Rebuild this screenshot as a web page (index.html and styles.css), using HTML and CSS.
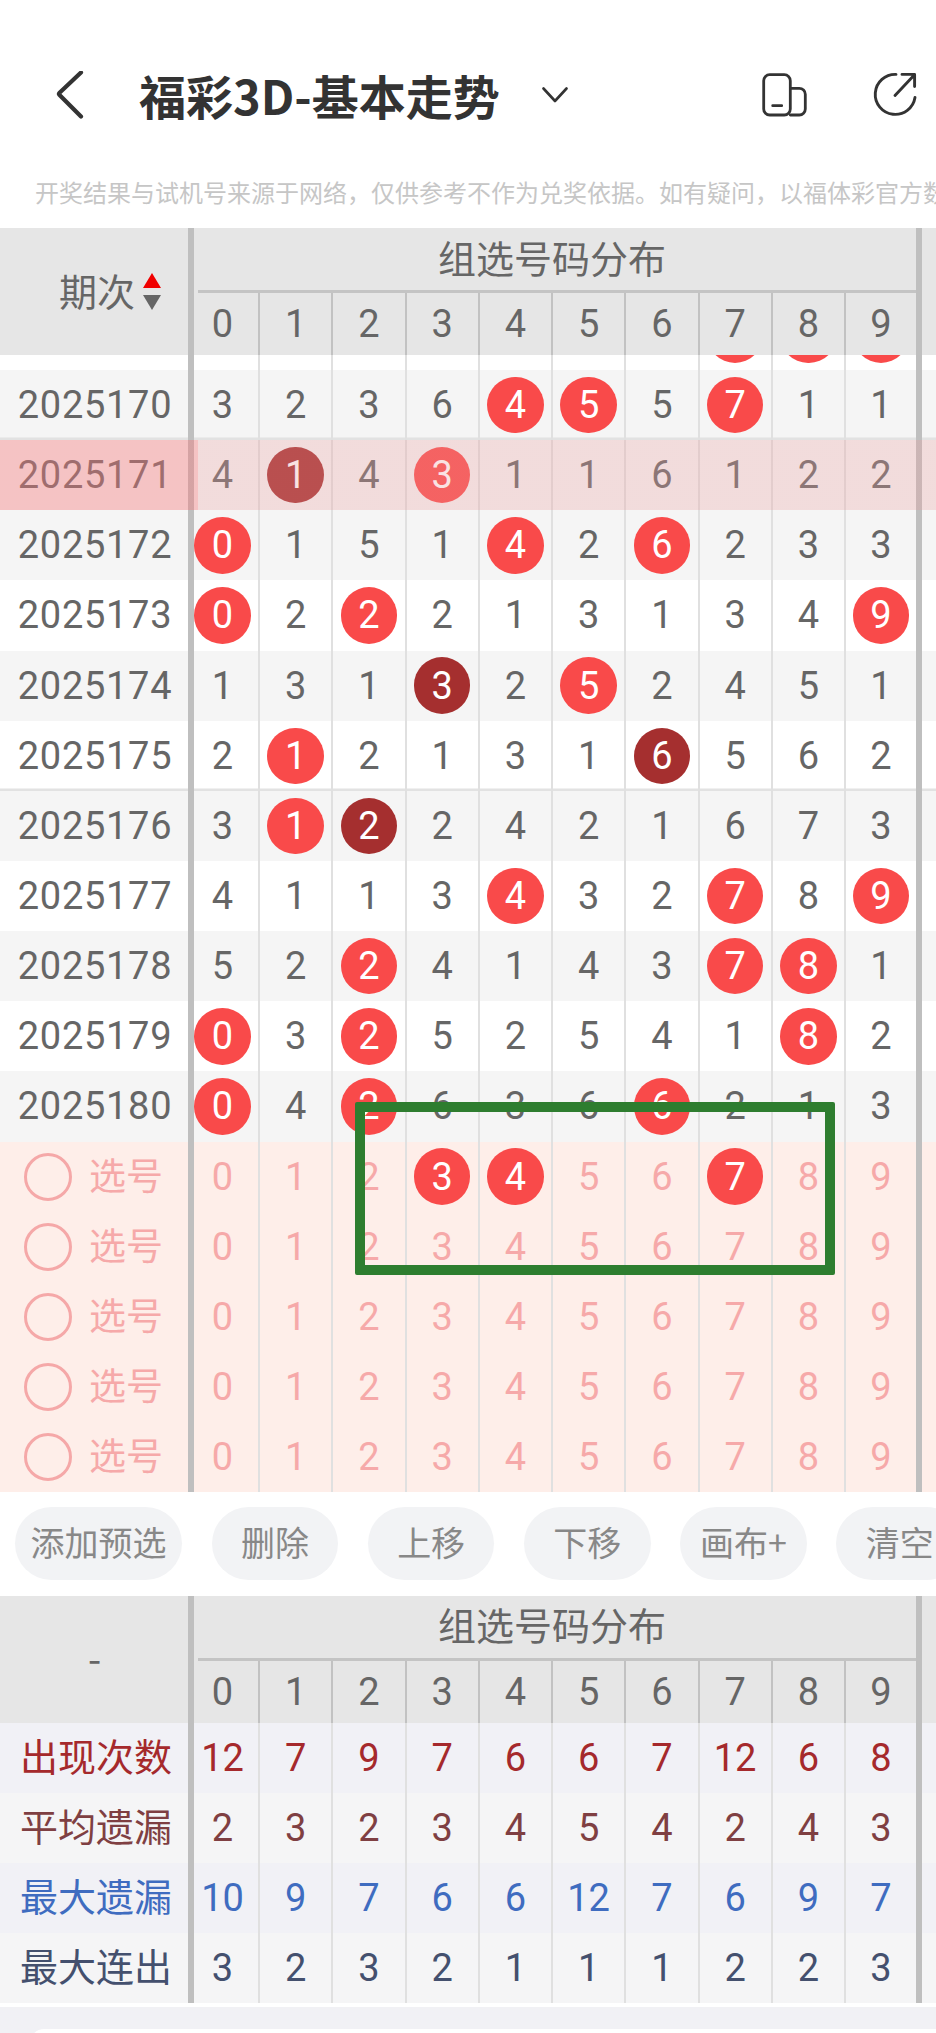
FILE: index.html
```html
<!DOCTYPE html>
<html lang="zh-CN">
<head>
<meta charset="utf-8">
<title>福彩3D-基本走势</title>
<link rel="stylesheet" href="styles.css">
</head>
<body>
<div class="page">
  <nav class="nav">
    <svg class="ico-back" viewBox="0 0 30 48" width="30" height="48"><path d="M26 3 L4.3 23.6 Q3.6 24.4 4.3 25.2 L26 47" transform="translate(0,-1.5)"/></svg>
    <h1 class="title">福彩3D-基本走势</h1>
    <svg class="ico-down" viewBox="0 0 26 16" width="26" height="16"><path d="M1.5 1.5 L13 14 L24.5 1.5"/></svg>
    <svg class="ico-phone" viewBox="0 0 48 44" width="48" height="44"><rect x="2.7" y="1.7" width="26.6" height="40.3" rx="6"/><path d="M29.3 15.3h9a6 6 0 0 1 6 6V36a6 6 0 0 1-6 6h-9M11.7 32.7h9"/></svg>
    <svg class="ico-share" viewBox="0 0 46 46" width="46" height="46"><path d="M24 2.4 A20 20 0 1 0 43 25.5 M23 23.5 L42.5 2.8 M30 2.4 H42.6 V14.5"/></svg>
  </nav>
  <p class="notice">开奖结果与试机号来源于网络，仅供参考不作为兑奖依据。如有疑问，以福体彩官方数据为准</p>

  <section class="chart">
    <header class="thead">
      <div class="lead thead-lead">期次<span class="sort"><i class="up"></i><i class="dn"></i></span></div>
      <div class="thead-main">
        <div class="thead-title">组选号码分布</div>
        <div class="thead-nums"><span class="c">0</span><span class="c">1</span><span class="c">2</span><span class="c">3</span><span class="c">4</span><span class="c">5</span><span class="c">6</span><span class="c">7</span><span class="c">8</span><span class="c">9</span></div>
      </div>
    </header>
    <div class="tbody">
      <div class="row peek"><div class="lead">2025169</div><span class="c">2</span><span class="c">1</span><span class="c">2</span><span class="c">5</span><span class="c">3</span><span class="c">4</span><span class="c">4</span><span class="c"><b class="ball">7</b></span><span class="c"><b class="ball">8</b></span><span class="c"><b class="ball">9</b></span></div>
      <div class="row alt line"><div class="lead">2025170</div><span class="c">3</span><span class="c">2</span><span class="c">3</span><span class="c">6</span><span class="c"><b class="ball">4</b></span><span class="c"><b class="ball">5</b></span><span class="c">5</span><span class="c"><b class="ball">7</b></span><span class="c">1</span><span class="c">1</span></div>
      <div class="row alt hl"><div class="lead">2025171</div><span class="c">4</span><span class="c"><b class="ball dark">1</b></span><span class="c">4</span><span class="c"><b class="ball">3</b></span><span class="c">1</span><span class="c">1</span><span class="c">6</span><span class="c">1</span><span class="c">2</span><span class="c">2</span></div>
      <div class="row alt"><div class="lead">2025172</div><span class="c"><b class="ball">0</b></span><span class="c">1</span><span class="c">5</span><span class="c">1</span><span class="c"><b class="ball">4</b></span><span class="c">2</span><span class="c"><b class="ball">6</b></span><span class="c">2</span><span class="c">3</span><span class="c">3</span></div>
      <div class="row"><div class="lead">2025173</div><span class="c"><b class="ball">0</b></span><span class="c">2</span><span class="c"><b class="ball">2</b></span><span class="c">2</span><span class="c">1</span><span class="c">3</span><span class="c">1</span><span class="c">3</span><span class="c">4</span><span class="c"><b class="ball">9</b></span></div>
      <div class="row alt"><div class="lead">2025174</div><span class="c">1</span><span class="c">3</span><span class="c">1</span><span class="c"><b class="ball dark">3</b></span><span class="c">2</span><span class="c"><b class="ball">5</b></span><span class="c">2</span><span class="c">4</span><span class="c">5</span><span class="c">1</span></div>
      <div class="row line"><div class="lead">2025175</div><span class="c">2</span><span class="c"><b class="ball">1</b></span><span class="c">2</span><span class="c">1</span><span class="c">3</span><span class="c">1</span><span class="c"><b class="ball dark">6</b></span><span class="c">5</span><span class="c">6</span><span class="c">2</span></div>
      <div class="row alt"><div class="lead">2025176</div><span class="c">3</span><span class="c"><b class="ball">1</b></span><span class="c"><b class="ball dark">2</b></span><span class="c">2</span><span class="c">4</span><span class="c">2</span><span class="c">1</span><span class="c">6</span><span class="c">7</span><span class="c">3</span></div>
      <div class="row"><div class="lead">2025177</div><span class="c">4</span><span class="c">1</span><span class="c">1</span><span class="c">3</span><span class="c"><b class="ball">4</b></span><span class="c">3</span><span class="c">2</span><span class="c"><b class="ball">7</b></span><span class="c">8</span><span class="c"><b class="ball">9</b></span></div>
      <div class="row alt"><div class="lead">2025178</div><span class="c">5</span><span class="c">2</span><span class="c"><b class="ball">2</b></span><span class="c">4</span><span class="c">1</span><span class="c">4</span><span class="c">3</span><span class="c"><b class="ball">7</b></span><span class="c"><b class="ball">8</b></span><span class="c">1</span></div>
      <div class="row"><div class="lead">2025179</div><span class="c"><b class="ball">0</b></span><span class="c">3</span><span class="c"><b class="ball">2</b></span><span class="c">5</span><span class="c">2</span><span class="c">5</span><span class="c">4</span><span class="c">1</span><span class="c"><b class="ball">8</b></span><span class="c">2</span></div>
      <div class="row alt"><div class="lead">2025180</div><span class="c"><b class="ball">0</b></span><span class="c">4</span><span class="c"><b class="ball">2</b></span><span class="c">6</span><span class="c">3</span><span class="c">6</span><span class="c"><b class="ball">6</b></span><span class="c">2</span><span class="c">1</span><span class="c">3</span></div>
      <div class="row pick"><div class="lead"><i class="ring"></i>选号</div><span class="c">0</span><span class="c">1</span><span class="c">2</span><span class="c"><b class="ball">3</b></span><span class="c"><b class="ball">4</b></span><span class="c">5</span><span class="c">6</span><span class="c"><b class="ball">7</b></span><span class="c">8</span><span class="c">9</span></div>
      <div class="row pick"><div class="lead"><i class="ring"></i>选号</div><span class="c">0</span><span class="c">1</span><span class="c">2</span><span class="c">3</span><span class="c">4</span><span class="c">5</span><span class="c">6</span><span class="c">7</span><span class="c">8</span><span class="c">9</span></div>
      <div class="row pick"><div class="lead"><i class="ring"></i>选号</div><span class="c">0</span><span class="c">1</span><span class="c">2</span><span class="c">3</span><span class="c">4</span><span class="c">5</span><span class="c">6</span><span class="c">7</span><span class="c">8</span><span class="c">9</span></div>
      <div class="row pick"><div class="lead"><i class="ring"></i>选号</div><span class="c">0</span><span class="c">1</span><span class="c">2</span><span class="c">3</span><span class="c">4</span><span class="c">5</span><span class="c">6</span><span class="c">7</span><span class="c">8</span><span class="c">9</span></div>
      <div class="row pick"><div class="lead"><i class="ring"></i>选号</div><span class="c">0</span><span class="c">1</span><span class="c">2</span><span class="c">3</span><span class="c">4</span><span class="c">5</span><span class="c">6</span><span class="c">7</span><span class="c">8</span><span class="c">9</span></div>
    </div>
    <div class="marker"></div>
  </section>

  <div class="tools">
    <button class="tool">添加预选</button><button class="tool">删除</button><button class="tool">上移</button><button class="tool">下移</button><button class="tool">画布+</button><button class="tool">清空</button>
  </div>

  <section class="chart stats">
    <header class="thead">
      <div class="lead thead-lead">-</div>
      <div class="thead-main">
        <div class="thead-title">组选号码分布</div>
        <div class="thead-nums"><span class="c">0</span><span class="c">1</span><span class="c">2</span><span class="c">3</span><span class="c">4</span><span class="c">5</span><span class="c">6</span><span class="c">7</span><span class="c">8</span><span class="c">9</span></div>
      </div>
    </header>
    <div class="row stat s-count"><div class="lead">出现次数</div><span class="c">12</span><span class="c">7</span><span class="c">9</span><span class="c">7</span><span class="c">6</span><span class="c">6</span><span class="c">7</span><span class="c">12</span><span class="c">6</span><span class="c">8</span></div>
    <div class="row stat s-avg"><div class="lead">平均遗漏</div><span class="c">2</span><span class="c">3</span><span class="c">2</span><span class="c">3</span><span class="c">4</span><span class="c">5</span><span class="c">4</span><span class="c">2</span><span class="c">4</span><span class="c">3</span></div>
    <div class="row stat s-max"><div class="lead">最大遗漏</div><span class="c">10</span><span class="c">9</span><span class="c">7</span><span class="c">6</span><span class="c">6</span><span class="c">12</span><span class="c">7</span><span class="c">6</span><span class="c">9</span><span class="c">7</span></div>
    <div class="row stat s-run"><div class="lead">最大连出</div><span class="c">3</span><span class="c">2</span><span class="c">3</span><span class="c">2</span><span class="c">1</span><span class="c">1</span><span class="c">1</span><span class="c">2</span><span class="c">2</span><span class="c">3</span></div>
  </section>

  <footer class="foot"><div class="foot-card"></div></footer>
</div>
</body>
</html>
```
FILE: styles.css
```css
* { box-sizing: border-box; }
html, body { margin: 0; padding: 0; background: #fff; }
body { width: 936px; height: 2033px; overflow: hidden; font-family: Roboto, "Noto Sans CJK SC", sans-serif; color: #666; }
.page { width: 936px; height: 2033px; overflow: hidden; display: flex; flex-direction: column; }

/* top bar */
.nav { height: 70px; margin-top: 60px; display: flex; align-items: center; padding-left: 55px; flex: none; }
.nav svg { flex: none; fill: none; stroke: #333; stroke-linecap: round; stroke-linejoin: round; }
.ico-back { stroke-width: 4.2; margin-right: 54px; }
.title { margin: 0; font: 700 47px/70px "Noto Sans CJK SC", sans-serif; color: #333; white-space: nowrap; }
.ico-down { stroke-width: 2.6; margin-left: 42px; margin-right: 193px; }
.ico-phone { stroke-width: 2.8; }
.ico-share { stroke-width: 2.9; margin-left: 63px; }
.notice { margin: 45px 0 0; padding-left: 35px; height: 35px; font: 400 24px/34px "Noto Sans CJK SC", sans-serif; color: #c6c6c6; white-space: nowrap; flex: none; }

/* chart */
.chart { position: relative; flex: none; margin-top: 18px; }
.thead { position: relative; z-index: 3; display: flex; background: #e6e6e6; height: 127px; }
.lead { width: 194px; flex: none; border-right: 6px solid #bfbfbf; display: flex; align-items: center; justify-content: center; padding-left: 2px; font: 400 38px/1 Roboto, "Noto Sans CJK SC", sans-serif; letter-spacing: .7px; }
.thead-lead { font-family: "Noto Sans CJK SC", sans-serif; letter-spacing: 0; padding: 0 0 4px 59px; justify-content: flex-start; }
.stats .thead-lead { padding: 0 0 4px 88px; }
.sort { display: inline-flex; flex-direction: column; margin: 4px 0 0 8px; gap: 7px; }
.sort i { display: block; width: 0; height: 0; border-left: 9.5px solid transparent; border-right: 9.5px solid transparent; }
.sort .up { border-bottom: 15px solid #f00000; }
.sort .dn { border-top: 15px solid #666; }
.thead-main { width: 728px; flex: none; border-right: 6px solid #bfbfbf; display: flex; flex-direction: column; }
.thead-title { height: 65px; margin-left: 4px; border-bottom: 3px solid #c4c4c4; display: flex; align-items: center; justify-content: center; font: 400 38px/1 "Noto Sans CJK SC", sans-serif; padding: 0 10px 5px 0; }
.thead-nums { flex: 1; display: grid; grid-template-columns: 66px repeat(8, 73.25px) 70px; }
.c { display: flex; align-items: center; justify-content: center; border-right: 2.5px solid #e0e0e0; font-size: 38px; line-height: 1; min-width: 0; }
.thead-nums .c { border-right-color: #c2c2c2; }
.thead-nums .c:first-child, .row .c:nth-child(2) { padding-right: 7px; }
.thead-nums .c:last-child { border-right: 0; }

.row { position: relative; display: grid; grid-template-columns: 194px 66px repeat(8, 73.25px) 76px 14px; height: 70.15px; background: #fff; }
.row .c:last-child { border-right: 6px solid #bfbfbf; }
.alt { background: #f5f5f5; }
.tbody { display: flow-root; }
.peek { margin-top: -55.15px; background: #fff; }
.line { box-shadow: inset 0 -2.5px 0 #e2e2e2; }
.hl::after { content: ""; position: absolute; inset: 0; pointer-events: none; background: linear-gradient(to right, rgba(245, 120, 122, .4) 198px, rgba(234, 158, 158, .29) 198px); }
.ball { display: flex; align-items: center; justify-content: center; width: 56.5px; height: 56.5px; border-radius: 50%; background: #f94a4a; color: #fff; font-weight: 400; flex: none; }
.ball.dark { background: #a52f2f; }

.pick { height: 70px; background: #feeee9; color: #f6a9a9; }
.pick .lead { justify-content: flex-start; padding: 0 0 5px 24px; font-family: "Noto Sans CJK SC", sans-serif; letter-spacing: 0; font-size: 37px; }
.ring { display: block; width: 48px; height: 48px; border: 3px solid #f5a8a8; border-radius: 50%; margin: 5px 17px 0 0; flex: none; }
.marker { position: absolute; left: 355px; top: 874px; width: 480px; height: 173px; border: 10px solid #2e7d2f; border-radius: 2px; z-index: 2; }

/* actions */
.tools { display: flex; gap: 29.7px; height: 104px; padding: 15px 0 0 15px; overflow: hidden; flex: none; }
.tool { flex: none; height: 73px; min-width: 126.5px; padding: 0 15.5px 3px; border: 0; border-radius: 37px; background: #f2f3f5; font: 400 34px/1 "Noto Sans CJK SC", sans-serif; color: #888; }

/* stats */
.stats { margin-top: 0; }
.stat { height: 70px; background: #f5f5f6; }
.stat .lead { font-family: "Noto Sans CJK SC", sans-serif; letter-spacing: 0; padding: 0 0 5px 4px; }
.s-count, .s-max { background: #f1f1f6; }
.s-count { color: #a5292c; }
.s-avg { color: #7f3f42; }
.s-max { color: #3f6cc0; }
.s-run { color: #44506e; }

.foot { flex: 1; margin-top: 4px; background: #f1f1f5; padding: 22px 0 0 30px; }
.foot-card { height: 40px; background: #fff; border-radius: 14px 0 0 0; }
```
